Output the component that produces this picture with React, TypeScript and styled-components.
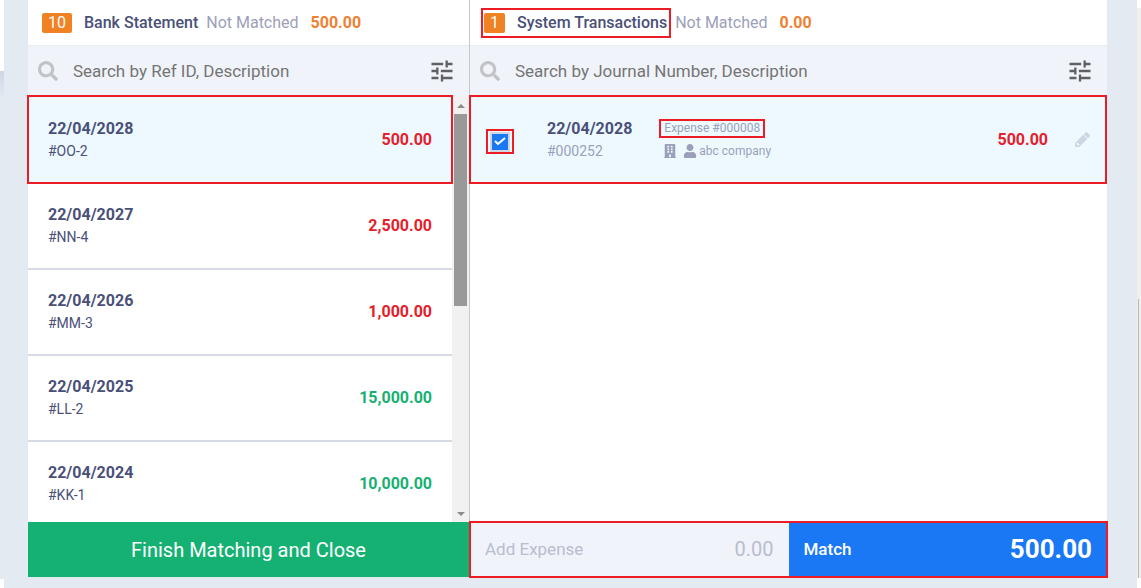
import React from 'react';
import styled, { createGlobalStyle, css } from 'styled-components';
import { FaBuilding, FaSearch, FaUser } from 'react-icons/fa';
import { MdTune } from 'react-icons/md';

const GlobalStyle = createGlobalStyle`
  *, *::before, *::after { box-sizing: border-box; }
  body {
    margin: 0;
    font-family: Roboto, "Liberation Sans", sans-serif;
    font-size: 16px;
    color: #4a5078;
    background: #e3eaf2;
  }
  button, input { font-family: inherit; }
`;

const marker = css`
  outline: 2px solid #ed1c24;
`;

const Page = styled.div`
  display: grid;
  grid-template-columns: 4px minmax(0, 1fr) 4px;
  grid-template-rows: minmax(0, 1fr);
  height: 100vh;
  min-height: 480px;
  overflow: hidden;
`;

const LeftEdge = styled.div`
  display: flex;
  flex-direction: column;
  background: #fff;
`;

const EdgeTop = styled.div`
  height: 71px;
`;

const EdgeShade = styled.div`
  flex: 1;
  margin-bottom: 9px;
  background: linear-gradient(#cfd6e3, #e3eaf2 28px);
`;

const RightEdge = styled.div`
  display: flex;
  flex-direction: column;
  padding: 8px 0 10px;
  background: #fff;
`;

const EdgeTrack = styled.div`
  flex: 1;
  display: flex;
  flex-direction: column;
  justify-content: flex-end;
  background: #f0f0f0;
`;

const EdgeThumb = styled.div`
  height: 49%;
  margin-left: 1px;
  border-left: 1px solid #b4b4b4;
`;

const Dialog = styled.main`
  display: grid;
  grid-template-columns: 441px minmax(0, 1fr);
  grid-template-rows: minmax(0, 1fr);
  margin: 0 30px 11px 24px;
  background: #fff;
`;

const Panel = styled.section<{ $divided?: boolean }>`
  display: flex;
  flex-direction: column;
  min-width: 0;
  min-height: 0;
  ${({ $divided }) => $divided && css`border-left: 1px solid #c8c8c8;`}
`;

const PanelHeader = styled.header<{ $tight?: boolean }>`
  display: flex;
  align-items: center;
  gap: 8px;
  height: 46px;
  padding-left: ${({ $tight }) => ($tight ? 13 : 14)}px;
  border-bottom: 1px solid #e8ebef;
  white-space: nowrap;
`;

const HeaderTitle = styled.div<{ $marked?: boolean }>`
  display: flex;
  align-items: center;
  gap: 12px;
  ${({ $marked }) => $marked && css`
    ${marker}
    height: 26px;
    padding: 0 2px 0 1px;
    margin-right: -2px;
  `}
`;

const Count = styled.span`
  height: 20px;
  padding: 0 6px;
  border-radius: 2px;
  background: #f08223;
  color: #fff;
  line-height: 20px;
`;

const Title = styled.h2`
  margin: 0;
  font-size: 16px;
  font-weight: 500;
`;

const Status = styled.span`
  color: #9c9fba;
`;

const Unmatched = styled.strong`
  margin-left: 4px;
  font-weight: 700;
  color: #f08030;
`;

const SearchBar = styled.div`
  display: flex;
  align-items: center;
  gap: 15px;
  height: 50px;
  padding: 0 13px 0 10px;
  background: #f0f3f9;
  color: #c1c3c7;
`;

const SearchInput = styled.input`
  flex: 1;
  min-width: 0;
  padding: 0;
  border: 0;
  outline: 0;
  background: none;
  font-size: 17px;
  color: #4a5078;
  &::placeholder { color: #757575; opacity: 1; }
`;

const IconButton = styled.button<{ $pale?: boolean }>`
  display: flex;
  padding: 0;
  border: 0;
  background: none;
  color: ${({ $pale }) => ($pale ? '#cdd4e2' : '#5f6063')};
`;

const ListArea = styled.div<{ $inset?: boolean }>`
  display: flex;
  flex: 1;
  min-height: 0;
  padding-right: ${({ $inset }) => ($inset ? 1 : 0)}px;
`;

const Rows = styled.ul`
  position: relative;
  z-index: 1;
  flex: 1;
  min-width: 0;
  margin: 0;
  padding: 0;
  list-style: none;
  overflow: clip;
  overflow-clip-margin: 2px;
`;

const Row = styled.li<{ $selected?: boolean; $wide?: boolean }>`
  display: flex;
  align-items: center;
  justify-content: space-between;
  height: 86px;
  padding: 0 ${({ $wide }) => ($wide ? 16 : 20)}px 2px 20px;
  border-bottom: 2px solid #d5dae4;
  ${({ $selected }) => $selected && css`
    ${marker}
    outline-offset: -1px;
    height: 87px;
    margin-bottom: 1px;
    padding-bottom: 1px;
    background: #edf9ff;
    border-bottom: 0;
  `}
`;

const Entry = styled.div<{ $muted?: boolean }>`
  display: flex;
  flex-direction: column;
  font-size: 14px;
  line-height: 21px;
  color: ${({ $muted }) => ($muted ? '#9c9fba' : '#4a5078')};
`;

const EntryDate = styled.time`
  font-size: 16px;
  line-height: 24px;
  font-weight: 700;
  color: #4a5078;
`;

const Amount = styled.span<{ $credit?: boolean }>`
  font-weight: 700;
  color: ${({ $credit }) => ($credit ? '#17b072' : '#e5202a')};
`;

const Scrollbar = styled.div`
  display: flex;
  flex-direction: column;
  align-items: center;
  width: 17px;
  padding: 8px 0 6px;
  background: #f1f1f1;
`;

const Arrow = styled.span<{ $down?: boolean }>`
  border: 4px solid transparent;
  ${({ $down }) => ($down
    ? css`border-top-color: #8b8b8b; border-bottom: 0;`
    : css`border-bottom-color: #8b8b8b; border-top: 0;`)}
`;

const Track = styled.div`
  flex: 1;
  width: 13px;
  padding: 6px 0;
`;

const Thumb = styled.div`
  height: 49%;
  background: #999;
`;

const CheckLabel = styled.label`
  ${marker}
  display: flex;
  align-items: center;
  justify-content: center;
  width: 24px;
  height: 21px;
  margin: 5px 35px 0 -2px;
`;

const CheckInput = styled.input`
  appearance: none;
  width: 20px;
  height: 20px;
  margin: 0;
  border: 2px solid #cfd6e3;
  &:checked {
    background: #1a78f2 url("data:image/svg+xml,%3Csvg xmlns='http://www.w3.org/2000/svg' viewBox='0 0 16 16'%3E%3Cpath d='M3 7l3 3 7-6' fill='none' stroke='white' stroke-width='2'/%3E%3C/svg%3E") center / 16px no-repeat padding-box;
  }
`;

const Details = styled.div`
  display: flex;
  flex: 1;
  flex-direction: column;
  align-items: flex-start;
  gap: 6px;
  margin: 3px 0 0 29px;
  font-size: 12px;
  color: #9c9fba;
`;

const Reference = styled.span`
  ${marker}
  padding: 0 3px;
  line-height: 15px;
`;

const Company = styled.span`
  display: flex;
  align-items: center;
  gap: 2px;
  padding-left: 2px;
  line-height: 18px;
  svg:first-child { margin-right: 4px; }
`;

const RowEnd = styled.div`
  display: flex;
  align-items: center;
  gap: 27px;
`;

const Footer = styled.footer<{ $marked?: boolean }>`
  position: relative;
  z-index: 2;
  display: flex;
  height: 55px;
  ${({ $marked }) => $marked && css`
    ${marker}
    outline-offset: -1px;
  `}
`;

const FooterButton = styled.button<{ $tone: 'finish' | 'plain' | 'match' }>`
  display: flex;
  flex: 1;
  align-items: center;
  justify-content: ${({ $tone }) => ($tone === 'finish' ? 'center' : 'space-between')};
  padding: 0 15px ${({ $tone }) => ($tone === 'finish' ? 0 : 2)}px;
  border: 0;
  font-size: ${({ $tone }) => ($tone === 'finish' ? 20 : 17)}px;
  color: ${({ $tone }) => ($tone === 'plain' ? '#b9bdd0' : '#fff')};
  background: ${({ $tone }) => ({ finish: '#15b173', plain: '#f0f3f9', match: '#1a78f5' })[$tone]};
`;

const ActionLabel = styled.span<{ $strong?: boolean }>`
  font-weight: ${({ $strong }) => ($strong ? 500 : 400)};
`;

const Total = styled.span<{ $strong?: boolean }>`
  font-size: ${({ $strong }) => ($strong ? 26 : 20)}px;
  font-weight: ${({ $strong }) => ($strong ? 700 : 400)};
`;

const PencilIcon = () => (
  <svg width="15" height="15" viewBox="0 0 1516 1536" fill="currentColor" aria-hidden="true">
    <path d="M363 1408l91-91-235-235-91 91v107h128v128h107zM832 288l416 416-832 832h-416v-416zM1515 384q0 53-37 90l-166 166-416-416 166-165q36-38 90-38 53 0 91 38l235 234q37 39 37 91z" fillRule="evenodd" />
  </svg>
);

const statements = [
  { date: '22/04/2028', id: '#OO-2', amount: '500.00', selected: true },
  { date: '22/04/2027', id: '#NN-4', amount: '2,500.00' },
  { date: '22/04/2026', id: '#MM-3', amount: '1,000.00' },
  { date: '22/04/2025', id: '#LL-2', amount: '15,000.00', credit: true },
  { date: '22/04/2024', id: '#KK-1', amount: '10,000.00', credit: true },
];

export default function App() {
  return (
    <>
      <GlobalStyle />
      <Page>
        <LeftEdge>
          <EdgeTop />
          <EdgeShade />
        </LeftEdge>
        <Dialog>
          <Panel>
            <PanelHeader>
              <HeaderTitle>
                <Count>10</Count>
                <Title>Bank Statement</Title>
              </HeaderTitle>
              <Status>Not Matched</Status>
              <Unmatched>500.00</Unmatched>
            </PanelHeader>
            <SearchBar>
              <FaSearch size={20} />
              <SearchInput aria-label="Search bank statement" placeholder="Search by Ref ID, Description" />
              <IconButton aria-label="Filter bank statement"><MdTune size={28} /></IconButton>
            </SearchBar>
            <ListArea>
              <Rows>
                {statements.map((s) => (
                  <Row key={s.id} $selected={s.selected}>
                    <Entry>
                      <EntryDate>{s.date}</EntryDate>
                      <span>{s.id}</span>
                    </Entry>
                    <Amount $credit={s.credit}>{s.amount}</Amount>
                  </Row>
                ))}
              </Rows>
              <Scrollbar>
                <Arrow />
                <Track><Thumb /></Track>
                <Arrow $down />
              </Scrollbar>
            </ListArea>
            <Footer>
              <FooterButton $tone="finish">Finish Matching and Close</FooterButton>
            </Footer>
          </Panel>
          <Panel $divided>
            <PanelHeader $tight>
              <HeaderTitle $marked>
                <Count>1</Count>
                <Title>System Transactions</Title>
              </HeaderTitle>
              <Status>Not Matched</Status>
              <Unmatched>0.00</Unmatched>
            </PanelHeader>
            <SearchBar>
              <FaSearch size={20} />
              <SearchInput aria-label="Search system transactions" placeholder="Search by Journal Number, Description" />
              <IconButton aria-label="Filter system transactions"><MdTune size={28} /></IconButton>
            </SearchBar>
            <ListArea $inset>
              <Rows>
                <Row $selected $wide>
                  <CheckLabel>
                    <CheckInput type="checkbox" defaultChecked aria-label="Select transaction #000252" />
                  </CheckLabel>
                  <Entry $muted>
                    <EntryDate>22/04/2028</EntryDate>
                    <span>#000252</span>
                  </Entry>
                  <Details>
                    <Reference>Expense #000008</Reference>
                    <Company>
                      <FaBuilding size={14} />
                      <FaUser size={14} />
                      abc company
                    </Company>
                  </Details>
                  <RowEnd>
                    <Amount>500.00</Amount>
                    <IconButton $pale aria-label="Edit transaction"><PencilIcon /></IconButton>
                  </RowEnd>
                </Row>
              </Rows>
            </ListArea>
            <Footer $marked>
              <FooterButton $tone="plain">
                <ActionLabel>Add Expense</ActionLabel>
                <Total>0.00</Total>
              </FooterButton>
              <FooterButton $tone="match">
                <ActionLabel $strong>Match</ActionLabel>
                <Total $strong>500.00</Total>
              </FooterButton>
            </Footer>
          </Panel>
        </Dialog>
        <RightEdge>
          <EdgeTrack><EdgeThumb /></EdgeTrack>
        </RightEdge>
      </Page>
    </>
  );
}
